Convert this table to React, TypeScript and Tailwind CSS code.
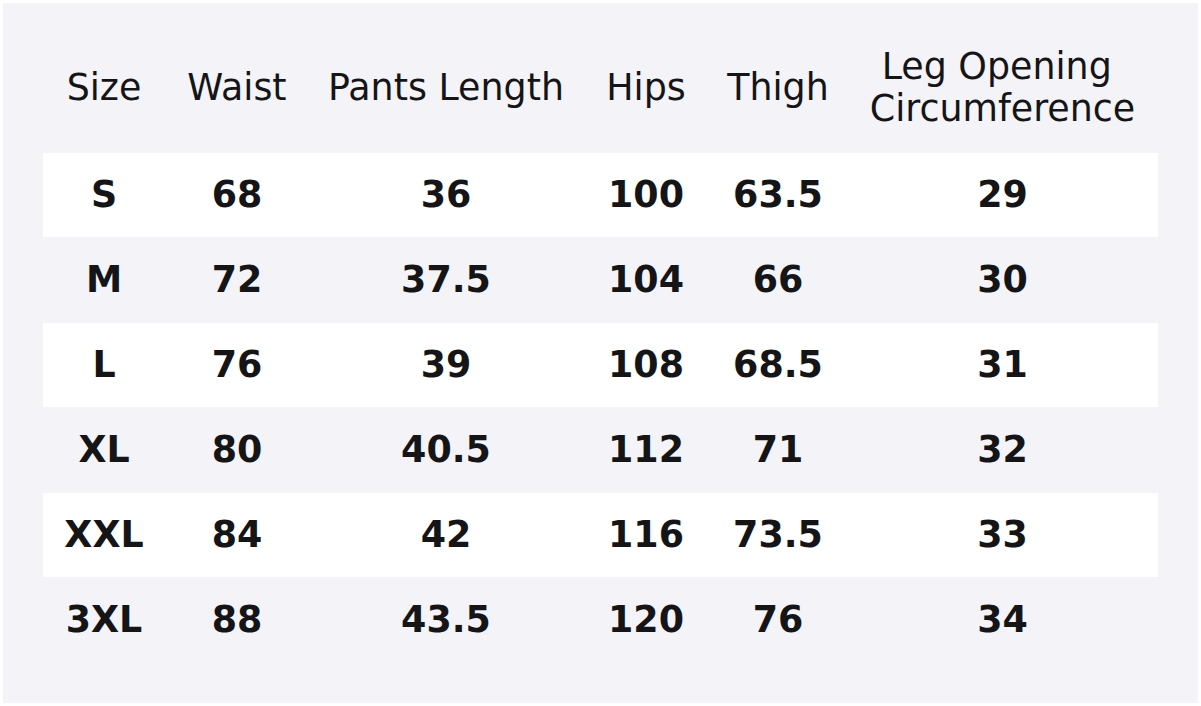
import React from "react";

const headers: React.ReactNode[] = [
  "Size",
  "Waist",
  "Pants Length",
  "Hips",
  "Thigh",
  <>
    Leg Opening{"\u00a0"}
    <br />
    Circumference
  </>,
];

const rows: string[][] = [
  ["S", "68", "36", "100", "63.5", "29"],
  ["M", "72", "37.5", "104", "66", "30"],
  ["L", "76", "39", "108", "68.5", "31"],
  ["XL", "80", "40.5", "112", "71", "32"],
  ["XXL", "84", "42", "116", "73.5", "33"],
  ["3XL", "88", "43.5", "120", "76", "34"],
];

const grid = "grid grid-cols-[122px_144px_274px_126px_138px_311px]";

export default function App() {
  return (
    <div
      className="w-[1201px] h-[706px] bg-white p-[3px]"
      style={{ fontFamily: '"DejaVu Sans", sans-serif' }}
    >
      <div className="w-full h-full bg-[#f3f3f8] pt-[20px] px-[40px] text-[#151517]">
        <div className={`${grid} h-[130px] items-center text-[36.4px] leading-[1.16] text-center`}>
          {headers.map((h, i) => (
            <div key={i}>{h}</div>
          ))}
        </div>
        {rows.map((r, ri) => (
          <div
            key={ri}
            className={`${grid} items-center text-center font-bold text-[36.4px] leading-[1.2] ${
              ri % 2 === 0 ? "bg-white h-[84px]" : "h-[86px]"
            }`}
          >
            {r.map((c, ci) => (
              <div key={ci}>{c}</div>
            ))}
          </div>
        ))}
      </div>
    </div>
  );
}
